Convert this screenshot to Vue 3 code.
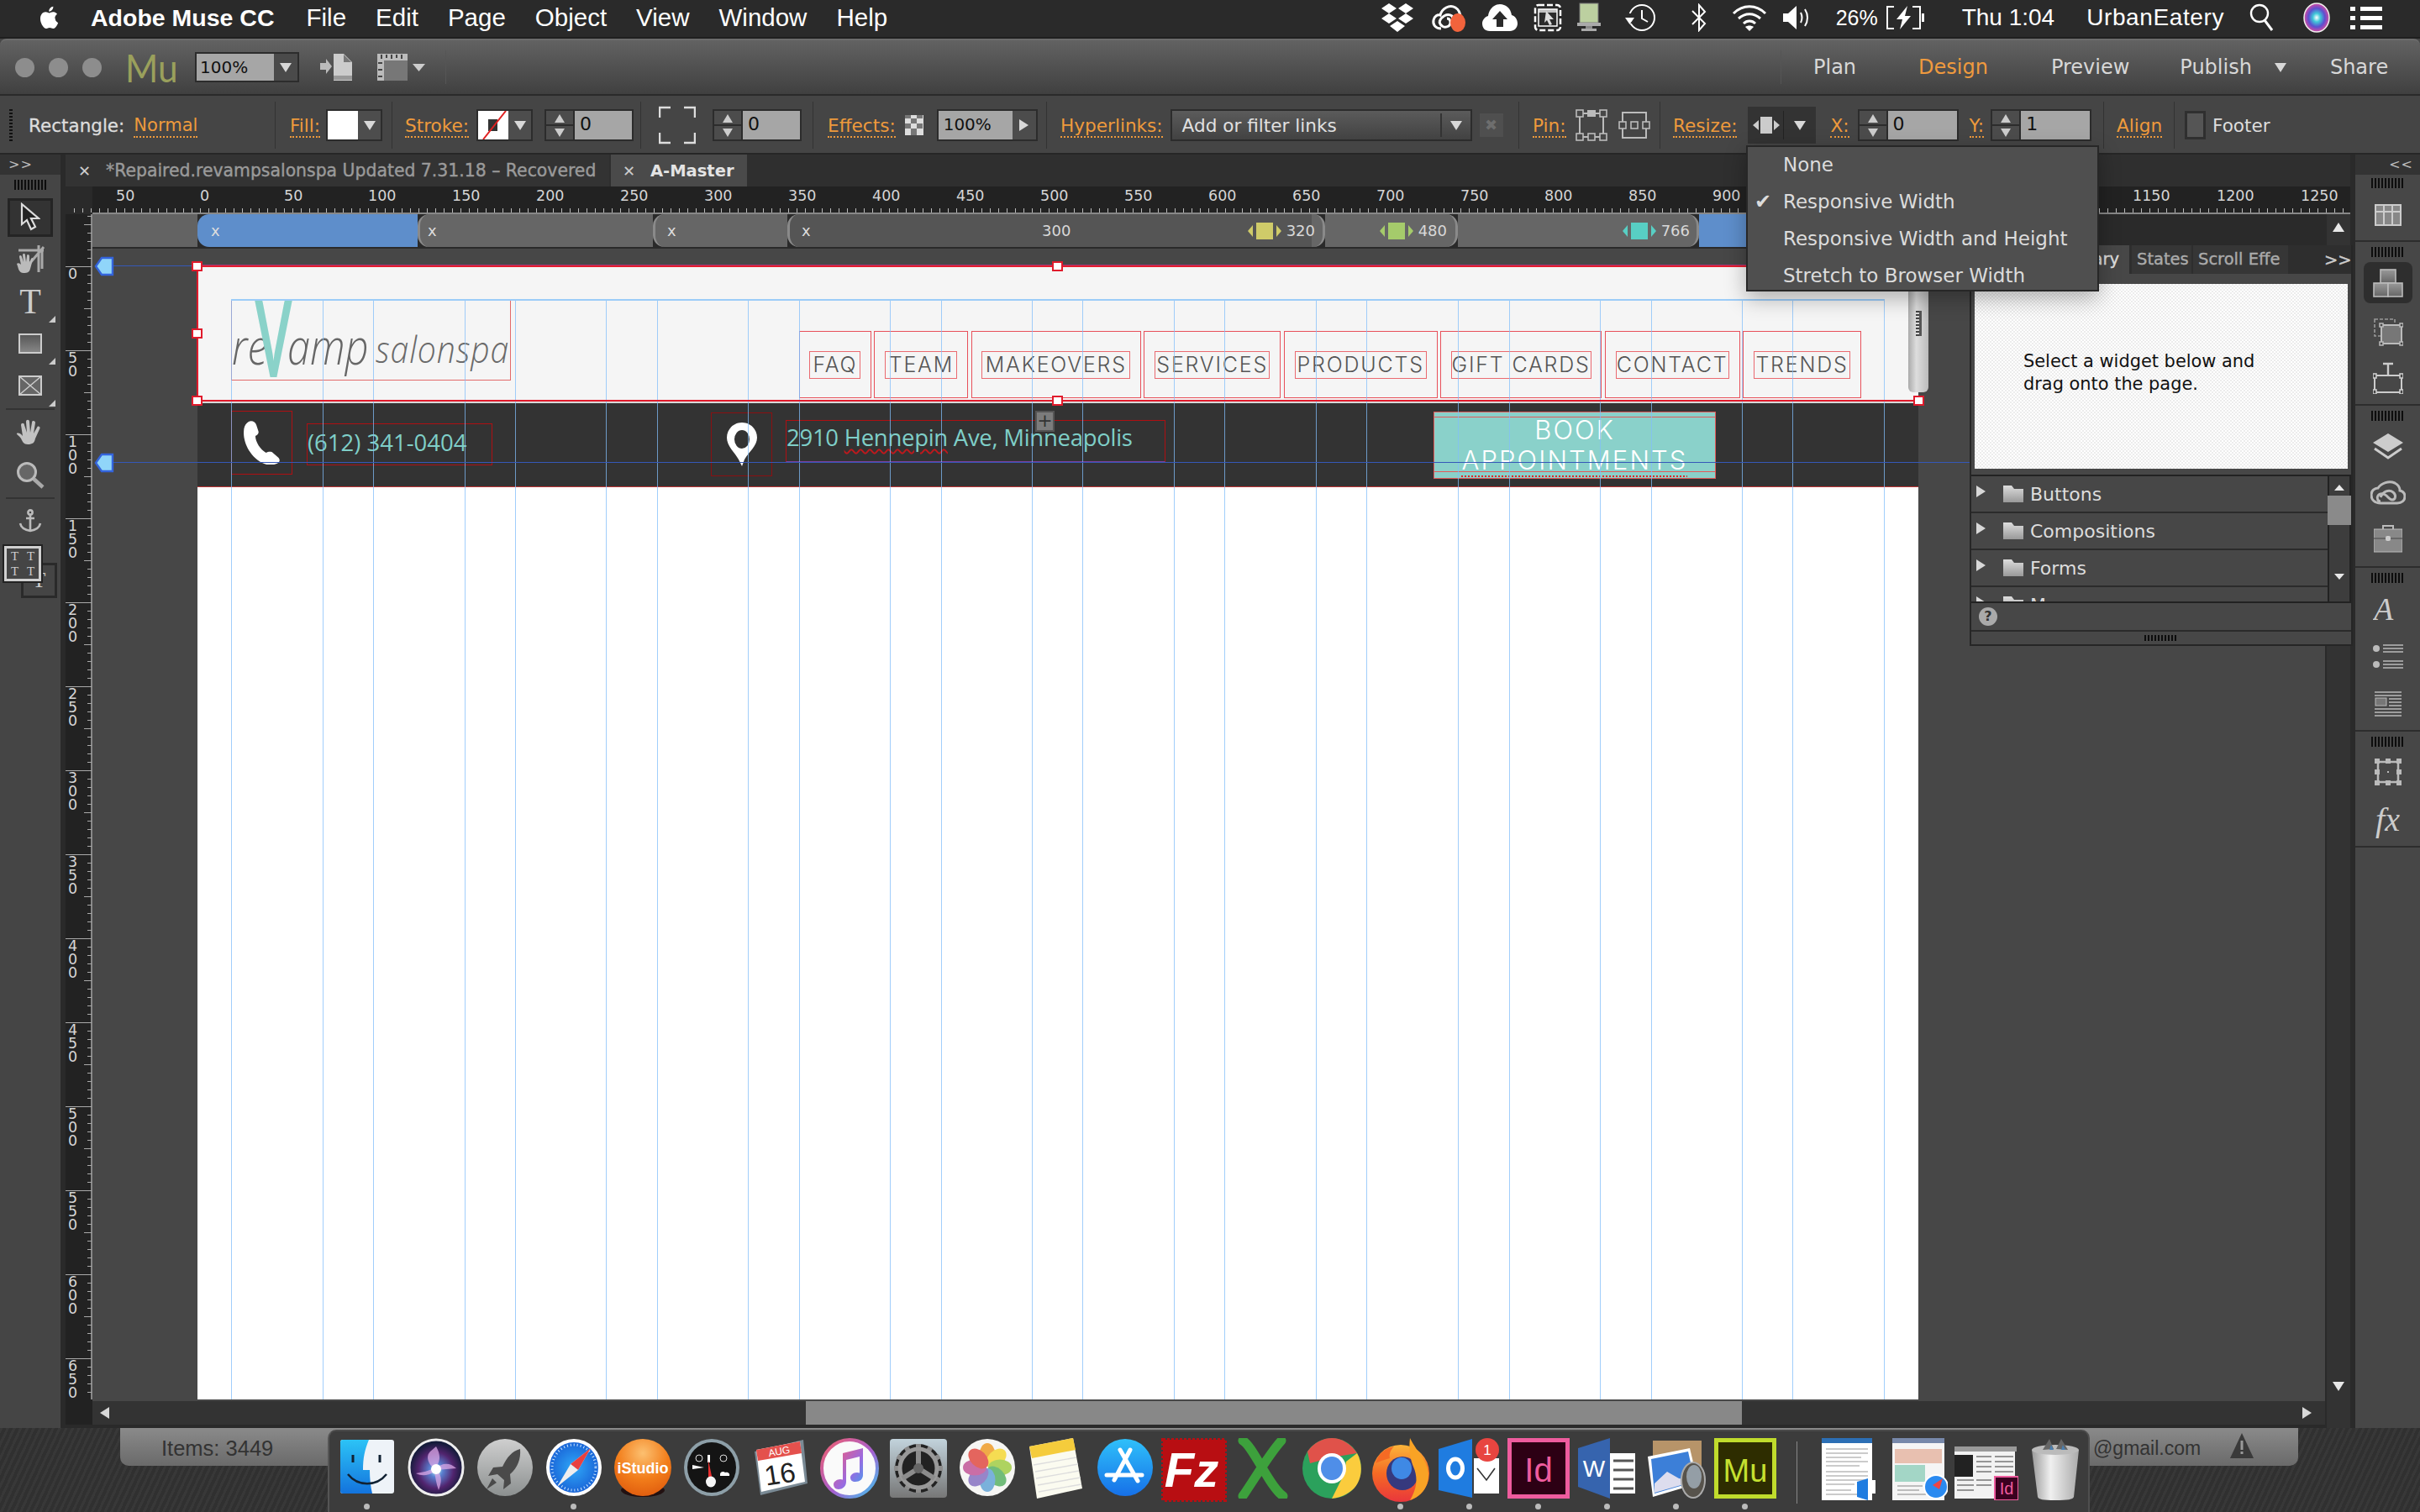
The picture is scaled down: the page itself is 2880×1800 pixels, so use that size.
<script setup>
const menus = ['File', 'Edit', 'Page', 'Object', 'View', 'Window', 'Help']
const rulerTicks = []
for (let x = 10; x <= 2719; x += 10) {
  const u = x - 157
  const h = u % 100 === 0 ? 29 : u % 50 === 0 ? 10 : 5
  rulerTicks.push({ x: x + 0.5, h })
}
const rulerLabels = []
for (let u = -50; u <= 1250; u += 50) rulerLabels.push({ x: 157 + u * 2 + 3, t: String(Math.abs(u)) })
const vTicks = []
for (let y = 2; y <= 1410; y += 10) {
  const u = y - 62
  const major = u % 100 === 0
  vTicks.push({ y: y + 0.5, x: major ? 0 : u % 50 === 0 ? 22 : 26 })
}
const vLabels = []
for (let u = 0; u <= 650; u += 50) {
  vLabels.push({ y: 62 + u * 2, d: String(u).split('') })
}
const pageCols = [275, 384, 444, 553, 613, 721, 782, 890, 951, 1059, 1120, 1228, 1288, 1397, 1457, 1566, 1626, 1735, 1796, 1904, 1965, 2073, 2133, 2242].map(x => x - 235)
const nav = [
  { t: 'FAQ', w: 86, i: 61 }, { t: 'TEAM', w: 112, i: 86 }, { t: 'MAKEOVERS', w: 202, i: 177 },
  { t: 'SERVICES', w: 163, i: 137 }, { t: 'PRODUCTS', w: 183, i: 157 }, { t: 'GIFT CARDS', w: 192, i: 167 },
  { t: 'CONTACT', w: 161, i: 135 }, { t: 'TRENDS', w: 141, i: 115 }
]
const folders = ['Buttons', 'Compositions', 'Forms', 'Menus']
const petals = [
  ['#f0a030', 0], ['#f5d93c', 45], ['#a5cf4c', 90], ['#5fb56a', 135],
  ['#6aa8d8', 180], ['#8a76c4', 225], ['#c45c9c', 270], ['#e2524a', 315]
]
const gearTeeth = [0, 30, 60, 90, 120, 150, 180, 210, 240, 270, 300, 330]
</script>

<template>
  <div class="screen">
    <header class="menubar">
      <svg class="apple" viewBox="0 0 24 24"><path fill="#fff" d="M18.7 12.5c0-2.6 2.1-3.8 2.2-3.9-1.2-1.8-3.1-2-3.7-2-1.6-.2-3.1.9-3.9.9s-2.1-.9-3.4-.9C8.2 6.6 6.6 7.6 5.7 9.1c-1.9 3.2-.5 8 1.3 10.6.9 1.3 2 2.7 3.3 2.7 1.3-.1 1.8-.9 3.4-.9s2 .9 3.4.8c1.4 0 2.3-1.3 3.2-2.6 1-1.5 1.4-2.9 1.4-3-.1 0-2.8-1.1-2.8-4.2zM16 4.6c.7-.9 1.2-2.1 1.1-3.3-1 0-2.3.7-3 1.6-.7.8-1.2 2-1.1 3.2 1.2.1 2.3-.6 3-1.5z"/></svg>
      <strong class="appname">Adobe Muse CC</strong>
      <span v-for="m in menus" :key="m" class="menu">{{ m }}</span>
      <div class="status">
        <span class="slot w60"><svg width="40" height="34" viewBox="0 0 40 34"><g fill="#fff"><path d="M10 0l9 6-9 6-9-6zM30 0l9 6-9 6-9-6zM10 12l9 6-9 6-9-6zM30 12l9 6-9 6-9-6zM20 21l9 6-9 7-9-7z"/></g></svg></span>
        <span class="slot w62"><svg width="42" height="34" viewBox="0 0 42 34"><g fill="none" stroke="#fff" stroke-width="3"><path d="M12 30C5 30 2 25 3 20 4 15 8 13 11 14 13 6 22 1 29 5c5 3 6 8 6 12"/><path d="M10 22c2-6 9-11 15-7l6 12"/><path d="M10 22c1 5 6 8 11 5 4-3 2-9-2-9"/></g><ellipse cx="32" cy="23" rx="9" ry="11" fill="#f2633c"/></svg></span>
        <span class="slot w60"><svg width="42" height="34" viewBox="0 0 42 34"><path fill="#fff" d="M9 33C3 33 0 29 0 24c0-4 3-8 7-9C8 7 14 1 21 1s13 5 14 13c4 1 7 5 7 10 0 5-4 9-9 9z"/><path fill="#2b2b2b" d="M21 9l9 10h-5v9h-8v-9h-5z"/></svg></span>
        <span class="slot w54"><svg width="34" height="34" viewBox="0 0 34 34"><rect x="2" y="2" width="30" height="30" rx="4" fill="none" stroke="#fff" stroke-width="2.5" stroke-dasharray="7 3"/><rect x="6" y="7" width="22" height="20" fill="#2b2b2b" stroke="#fff" stroke-width="1.5"/><path fill="#fff" d="M6 7h22v4H6z" opacity=".7"/><path fill="#ddd" d="M15 9l9 10-5 0 3 6-3 1-3-6-3 3z"/></svg></span>
        <span class="slot w44"><svg width="30" height="36" viewBox="0 0 30 36"><rect x="4" y="1" width="22" height="23" fill="#bcd0a0" stroke="#777"/><rect x="1" y="24" width="28" height="4" fill="#aaa"/><rect x="11" y="28" width="8" height="3" fill="#888"/><rect x="6" y="31" width="18" height="3" fill="#aaa"/></svg></span>
        <span class="slot w78"><svg width="38" height="34" viewBox="0 0 38 34"><circle cx="21" cy="17" r="15" fill="none" stroke="#fff" stroke-width="2"/><path d="M21 8v10l7 4" fill="none" stroke="#fff" stroke-width="2"/><path fill="#2b2b2b" d="M0 12h12v12H0z"/><path fill="#fff" d="M1 17h11l-5.5 8z"/></svg></span>
        <span class="slot w62"><svg width="20" height="34" viewBox="0 0 20 34"><path d="M2 9l15 15-7 8V2l7 8L2 25" fill="none" stroke="#fff" stroke-width="2"/></svg></span>
        <span class="slot w58"><svg width="42" height="32" viewBox="0 0 42 32"><g fill="none" stroke="#fff" stroke-width="3"><path d="M2 11c11-11 27-11 38 0"/><path d="M8 17c8-7 18-7 26 0"/><path d="M14 23c4-4 10-4 14 0"/></g><path fill="#fff" d="M21 32l-5-5c3-2 7-2 10 0z"/></svg></span>
        <span class="slot w56"><svg width="34" height="30" viewBox="0 0 34 30"><path fill="#fff" d="M0 10h6L16 1v28L6 20H0z"/><g fill="none" stroke="#fff" stroke-width="2"><path d="M21 9c2 4 2 8 0 12"/><path d="M26 5c4 6 4 14 0 20"/></g></svg></span>
        <span class="pct">26%</span>
        <svg class="batt" width="46" height="30" viewBox="0 0 46 30"><path fill="none" stroke="#fff" stroke-width="2" d="M10 2H2v26h8M32 2h9v26h-9"/><rect x="43" y="10" width="3" height="10" fill="#fff"/><path fill="#fff" d="M26 1L13 17h7l-3 12 13-16h-7z"/></svg>
        <span class="clock">Thu 1:04</span>
        <span class="user">UrbanEatery</span>
        <span class="slot w90"><svg width="30" height="34" viewBox="0 0 30 34"><circle cx="12" cy="12" r="10" fill="none" stroke="#fff" stroke-width="2.4"/><path d="M18 20l9 12" stroke="#fff" stroke-width="3"/></svg></span>
        <span class="slot w40"><svg width="32" height="36" viewBox="0 0 32 36"><defs><radialGradient id="siriA"><stop offset="0" stop-color="#fff"/><stop offset=".3" stop-color="#3fc8d8"/><stop offset=".65" stop-color="#5c4fd0"/><stop offset="1" stop-color="#d64aa0"/></radialGradient></defs><ellipse cx="16" cy="18" rx="15" ry="17" fill="url(#siriA)" stroke="#eee" stroke-width="1.5"/></svg></span>
        <span class="slot w78"><svg width="38" height="30" viewBox="0 0 38 30"><g fill="#fff"><rect x="0" y="2" width="6" height="5"/><rect x="0" y="13" width="6" height="5"/><rect x="0" y="24" width="6" height="5"/><rect x="12" y="2" width="26" height="5"/><rect x="12" y="13" width="26" height="5"/><rect x="12" y="24" width="26" height="5"/></g></svg></span>
      </div>
    </header>

    <section class="window">
      <div class="titlebar">
        <div class="lights"><i></i><i></i><i></i></div>
        <span class="mu">Mu</span>
        <div class="zoombox"><span class="zoomval">100%</span><span class="zoomdd"><i class="tri"></i></span></div>
        <svg class="ti1" width="38" height="32" viewBox="0 0 38 32"><path fill="#bbb" d="M0 11h7V6l7 9-7 9v-5H0z"/><path fill="#ccc" d="M16 0h12l10 10v22H16z"/><path fill="#777" d="M28 1l9 9h-9z"/><rect x="16" y="26" width="22" height="5" fill="#999"/></svg>
        <svg class="ti2" width="60" height="32" viewBox="0 0 60 32"><rect x="0" y="0" width="36" height="32" fill="#bbb"/><rect x="8" y="8" width="28" height="24" fill="#777"/><g fill="#444"><rect x="4" y="1" width="2" height="5"/><rect x="10" y="1" width="2" height="4"/><rect x="16" y="1" width="2" height="5"/><rect x="22" y="1" width="2" height="4"/><rect x="28" y="1" width="2" height="5"/><rect x="1" y="10" width="5" height="2"/><rect x="1" y="18" width="5" height="2"/><rect x="1" y="26" width="5" height="2"/></g><path fill="#ccc" d="M42 12h15l-7.5 9z"/></svg>
        <i class="vsep tbsep1"></i>
        <i class="vsep tbsep2"></i>
        <span class="tab-plan">Plan</span>
        <span class="tab-design">Design</span>
        <span class="tab-preview">Preview</span>
        <span class="tab-publish">Publish</span>
        <i class="tri publish-tri"></i>
        <span class="tab-share">Share</span>
      </div>

      <div class="controlbar">
        <div class="cg g-type"><i class="grip-v"></i><span class="rect-label">Rectangle:</span><span class="olink normal">Normal</span></div>
        <div class="cg g-fill"><span class="olink">Fill:</span>
          <div class="swatch"><i class="sw-w"></i><span class="sw-dd"><i class="tri"></i></span></div></div>
        <div class="cg g-stroke"><span class="olink">Stroke:</span>
          <div class="swatch"><span class="sw-w sw-none"><svg width="35" height="34" viewBox="0 0 35 34"><rect x="12" y="10" width="11" height="14" fill="#333"/><path d="M6 34L33 0" stroke="#e02020" stroke-width="2"/></svg></span><span class="sw-dd"><i class="tri"></i></span></div>
          <div class="spin s106"><span class="steps"><i class="up"></i><i class="down"></i></span><span class="val">0</span></div></div>
        <div class="cg g-corner">
          <svg class="corner" width="44" height="46" viewBox="0 0 44 46"><path fill="none" stroke="#ddd" stroke-width="2.5" d="M14 2H1v12M30 2h13v12M14 44H1V32M30 44h13V32"/></svg>
          <div class="spin s106"><span class="steps"><i class="up"></i><i class="down"></i></span><span class="val">0</span></div></div>
        <div class="cg g-effects"><span class="olink">Effects:</span>
          <svg class="check" width="22" height="24" viewBox="0 0 22 24"><rect width="22" height="24" fill="#ddd"/><g fill="#777"><rect width="7" height="4"/><rect x="14" width="7" height="4"/><rect x="7" y="4" width="7" height="6"/><rect y="10" width="7" height="6"/><rect x="14" y="10" width="7" height="6"/><rect x="7" y="16" width="7" height="8"/></g></svg>
          <div class="opacity"><span class="val pctv">100%</span><span class="arrowbtn"><i class="tri-r"></i></span></div></div>
        <div class="cg g-links"><span class="olink">Hyperlinks:</span>
          <div class="linkbox"><span class="linktext">Add or filter links</span><i class="linksep"></i><i class="tri"></i></div>
          <span class="xbtn">✖</span></div>
        <div class="cg g-pin"><span class="olink">Pin:</span>
          <svg width="38" height="38" viewBox="0 0 38 38" class="pin1"><rect x="5" y="5" width="28" height="28" fill="none" stroke="#bbb" stroke-width="2"/><g fill="#474747" stroke="#bbb" stroke-width="1.6"><rect x="1" y="1" width="8" height="8"/><rect x="29" y="1" width="8" height="8"/><rect x="1" y="29" width="8" height="8"/><rect x="15" y="29" width="8" height="8"/><rect x="29" y="29" width="8" height="8"/></g><rect x="14" y="1" width="10" height="8" fill="#bbb"/></svg>
          <svg width="38" height="38" viewBox="0 0 38 38" class="pin2"><rect x="5" y="4" width="28" height="30" fill="none" stroke="#bbb" stroke-width="2"/><g fill="#474747" stroke="#bbb" stroke-width="1.6"><rect x="1" y="15" width="8" height="8"/><rect x="15" y="15" width="8" height="8"/><rect x="29" y="15" width="8" height="8"/></g></svg>
        </div>
        <div class="cg g-resize"><span class="olink">Resize:</span>
          <div class="resizebox"><svg width="32" height="20" viewBox="0 0 32 20"><rect x="9" y="0" width="14" height="20" fill="#ccc"/><path fill="#ccc" d="M0 10l7-6v12zM32 10l-7-6v12z"/></svg><i class="linksep"></i><i class="tri"></i></div>
          <span class="olink">X:</span>
          <div class="spin s120"><span class="steps"><i class="up"></i><i class="down"></i></span><span class="val">0</span></div>
          <span class="olink">Y:</span>
          <div class="spin s120"><span class="steps"><i class="up"></i><i class="down"></i></span><span class="val">1</span></div></div>
        <div class="cg g-align"><span class="olink">Align</span></div>
        <div class="cg g-footer"><i class="cbox"></i><span class="foot">Footer</span></div>
      </div>

      <div class="workspace">
        <aside class="lefttools">
          <div class="collapse">&gt;&gt;</div>
          <i class="grip"></i>
          <div class="tool sel"><span class="selbox"><svg width="24" height="36" viewBox="0 0 24 36"><path d="M2 2v24l6-5 5 11 5-3-5-10h9z" fill="#222" stroke="#ddd" stroke-width="2.2"/></svg></span></div>
          <div class="tool"><svg width="40" height="34" viewBox="0 0 40 34"><path fill="none" stroke="#aaa" stroke-width="3" d="M14 6h20v22M6 6h30M30 0v32M36 2L14 28"/><path fill="#bbb" d="M4 22c2-2 5 1 5 1l-2-9c0-3 3-2 3 0l2 6-1-8c0-3 3-3 3 0l1 8 1-7c0-3 3-2 3 0l0 8 2-5c1-2 3-1 2 1l-3 11c-1 4-3 5-8 5-6 0-6-6-8-11z"/></svg></div>
          <div class="tool"><span class="tool-t">T</span><i class="corner-tri"></i></div>
          <div class="tool"><svg width="28" height="24" viewBox="0 0 28 24"><defs><linearGradient id="gr1" x1="0" x2="0" y1="0" y2="1"><stop offset="0" stop-color="#555"/><stop offset="1" stop-color="#888"/></linearGradient></defs><rect x="1" y="1" width="26" height="22" fill="url(#gr1)" stroke="#ccc" stroke-width="2"/></svg><i class="corner-tri"></i></div>
          <div class="tool"><svg width="28" height="24" viewBox="0 0 28 24"><rect x="1" y="1" width="26" height="22" fill="#666" stroke="#ccc" stroke-width="2"/><path d="M1 1l26 22M27 1L1 23" stroke="#ccc" stroke-width="1.5"/></svg><i class="corner-tri"></i></div>
          <i class="hsep first"></i>
          <div class="tool"><svg width="34" height="34" viewBox="0 0 34 34"><path fill="#c2c2c2" d="M1 17c3-2 7 3 7 3L6 7c0-3 4-3 4 0l3 9-1-13c0-3 4-3 4 0l1 13 2-12c0-3 4-2 4 0l-2 13 4-7c1-3 5-1 3 2l-5 11c-1 5-3 7-9 7-5 0-6-3-8-7-2-3-6-5-5-6z"/></svg></div>
          <div class="tool"><svg width="34" height="34" viewBox="0 0 34 34"><circle cx="13" cy="13" r="10.5" fill="#666" stroke="#bbb" stroke-width="3"/><path d="M21 21l11 10" stroke="#aaa" stroke-width="4.5"/></svg></div>
          <i class="hsep"></i>
          <div class="tool"><svg width="28" height="28" viewBox="0 0 28 28"><g fill="none" stroke="#bbb" stroke-width="2.6"><circle cx="14" cy="4" r="2.6"/><path d="M14 7v19M9 11h10M2 17c1 5 6 8 12 9 6-1 11-4 12-9"/></g></svg></div>
          <div class="tboxes">
            <span class="tbox back"><span>T</span></span>
            <span class="tbox front"><span>T</span><span>T</span><span>T</span><span>T</span></span>
          </div>
        </aside>

        <main class="main">
          <div class="tabs">
            <div class="tab t1"><b class="tx">✕</b><span>*Repaired.revampsalonspa Updated 7.31.18 – Recovered</span></div>
            <div class="tab t2"><b class="tx">✕</b><span>A-Master</span></div>
          </div>
          <svg class="hruler" width="2719" height="33" viewBox="0 0 2719 33">
            <rect x="32" y="0" width="2687" height="33" fill="#222"/>
            <rect x="32" y="31" width="2687" height="2" fill="#888"/>
            <path v-for="t in rulerTicks" :key="t.x" :d="`M${t.x} 31v-${t.h}`" stroke="#bbb" fill="none"/>
            <text v-for="l in rulerLabels" :key="l.x" :x="l.x" y="17" class="rtext">{{ l.t }}</text>
          </svg>
          <div class="below">
            <svg class="vruler" width="32" height="1441" viewBox="0 0 32 1441">
              <rect width="32" height="1441" fill="#222"/>
              <rect x="30" width="2" height="1411" fill="#888"/>
              <path v-for="t in vTicks" :key="t.y" :d="`M${t.x} ${t.y}H31`" stroke="#aaa" fill="none"/>
              <g v-for="l in vLabels" :key="l.y">
                <text v-for="(c, i) in l.d" :key="i" x="3" :y="l.y + 15 + i * 16" class="rtext">{{ c }}</text>
              </g>
            </svg>
            <div class="stagecol">
              <div class="bpbar">
                <div class="seg s0"></div>
                <div class="seg s1"><b class="bx">x</b></div>
                <div class="seg s2 lc"><b class="bx">x</b></div>
                <div class="seg s3 lc"><b class="bx">x</b></div>
                <div class="seg s4 lc"><b class="bx">x</b><span class="bp300">300</span>
                  <span class="bpm m320"><i class="la yl"></i><i class="bpr yb"></i><i class="ra yl"></i><em>320</em></span></div>
                <div class="seg s6 rc"><span class="bpm m480"><i class="la gr"></i><i class="bpr gb"></i><i class="ra gr"></i><em>480</em></span></div>
                <div class="seg s7 rc"><span class="bpm m766"><i class="la te"></i><i class="bpr tb"></i><i class="ra te"></i><em>766</em></span></div>
                <div class="seg s8"></div>
                <div class="seg s9"></div>
              </div>
              <div class="stage">
                <div class="guide-h g1"></div>
                <div class="guide-h g2"></div>
                <svg class="gmark gm1" width="24" height="24" viewBox="0 0 24 24"><path d="M22 2H9L2 12l7 10h13z" fill="#90d5f9" stroke="#3464dc" stroke-width="2.4"/></svg>
                <svg class="gmark gm2" width="24" height="24" viewBox="0 0 24 24"><path d="M22 2H9L2 12l7 10h13z" fill="#90d5f9" stroke="#3464dc" stroke-width="2.4"/></svg>
                <div class="page">
                  <div class="site-head">
                    <div class="logo">
                      <span class="lg-re">re</span><span class="lg-v">V</span><span class="lg-amp">amp</span>
                      <span class="lg-sp">salonspa</span>
                    </div>
                    <nav class="nav">
                      <div v-for="n in nav" :key="n.t" class="navcell" :style="{ width: n.w + 'px' }">
                        <span class="navlabel" :style="{ width: n.i + 'px' }">{{ n.t }}</span>
                      </div>
                    </nav>
                  </div>
                  <div class="site-band">
                    <div class="phonebox"><svg width="46" height="52" viewBox="0 0 40 52" preserveAspectRatio="none"><path fill="#fff" d="M6 1c3-2 7 0 8 4l2 7c1 3-1 5-3 6 0 7 5 16 11 20 2-1 5-2 7 0l6 6c2 3 1 6-2 7-4 2-9 2-13 0C8 44 0 26 1 12 1 7 3 3 6 1z"/></svg></div>
                    <div class="phonenum">(612) 341-0404</div>
                    <div class="pinbox"><svg width="36" height="52" viewBox="0 0 36 52"><path fill="#fff" fill-rule="evenodd" d="M18 0C8 0 0 8 0 18c0 10 9 17 14 26l4 8 3-8c5-9 15-16 15-26C36 8 28 0 18 0zm0 9a9 11 0 1 1 0 22 9 11 0 0 1 0-22z"/></svg></div>
                    <div class="addr"><span>2910 <u class="sq">Hennepin</u> Ave, Minneapolis</span></div>
                    <div class="plus">+</div>
                    <div class="book"><span>BOOK</span><span class="ap">APPOINTMENTS</span></div>
                  </div>
                  <i v-for="c in pageCols" :key="c" class="col" :style="{ left: c + 'px' }"></i>
                  <i class="col-top"></i>
                  <i class="sel-top"></i>
                  <i class="sel-left"></i>
                  <i class="sel-bottom"></i>
                  <i class="h h1"></i><i class="h h2"></i><i class="h h3"></i><i class="h h4"></i><i class="h h5"></i><i class="h h6"></i>
                  <div class="resizer"><i></i></div>
                </div>
              </div>
              <div class="hscroll">
                <i class="tri-l"></i>
                <span class="hthumb"></span>
                <i class="tri-r hr"></i>
              </div>
            </div>
            <div class="vscroll"><i class="tri-u"></i><i class="tri-d"></i></div>
          </div>
        </main>

        <aside class="rightdock">
          <div class="collapse r">&lt;&lt;</div>
          <div class="rsec s-a"><i class="grip"></i>
            <svg class="ric" width="32" height="26" viewBox="0 0 32 26"><rect width="32" height="26" fill="#888"/><path d="M0 1h32M1 0v26M31 0v26M0 25h32M0 9h32M11 0v26M21 0v26" stroke="#ccc" stroke-width="2"/></svg></div>
          <div class="rsec s-b"><i class="grip"></i>
            <span class="rbtn"><svg width="36" height="34" viewBox="0 0 36 34"><defs><linearGradient id="gr2" x1="0" x2="0" y1="0" y2="1"><stop offset="0" stop-color="#999"/><stop offset="1" stop-color="#666"/></linearGradient></defs><g fill="url(#gr2)" stroke="#bbb" stroke-width="1.6"><rect x="9" y="1" width="18" height="16"/><rect x="1" y="17" width="17" height="16"/><rect x="18" y="17" width="17" height="16"/></g></svg></span>
            <svg class="ric r1" width="36" height="36" viewBox="0 0 36 36"><rect x="2" y="3" width="24" height="20" fill="none" stroke="#999" stroke-width="1.6" stroke-dasharray="4 2"/><rect x="10" y="10" width="24" height="22" fill="#777" stroke="#bbb" stroke-width="2"/><g fill="#474747" stroke="#bbb" stroke-width="1.5"><rect x="8" y="8" width="4" height="4"/><rect x="32" y="8" width="4" height="4"/><rect x="8" y="30" width="4" height="4"/><rect x="32" y="30" width="4" height="4"/></g></svg>
            <svg class="ric r2" width="36" height="38" viewBox="0 0 36 38"><path d="M12 2h12M18 2v14" stroke="#ccc" stroke-width="2.4"/><rect x="2" y="16" width="32" height="20" fill="none" stroke="#ccc" stroke-width="2"/><g fill="#474747" stroke="#ccc" stroke-width="1.6"><rect x="0" y="14" width="4" height="5"/><rect x="32" y="14" width="4" height="5"/><rect x="0" y="33" width="4" height="5"/><rect x="32" y="33" width="4" height="5"/></g></svg></div>
          <div class="rsec s-c"><i class="grip"></i>
            <svg class="ric r3" width="36" height="35" viewBox="0 0 36 35"><path fill="#ccc" d="M18 0l18 11-18 11L0 11z"/><path fill="none" stroke="#ccc" stroke-width="3" d="M2 18l16 11 16-11"/></svg>
            <svg class="ric r4" width="42" height="30" viewBox="0 0 42 30"><g fill="none" stroke="#bbb" stroke-width="3"><path d="M12 28C5 28 1 24 1 18 1 13 5 10 9 10 13 4 22 1 29 4c4 2 6 5 6 9 4 1 6 4 6 7 0 5-4 8-9 8z"/><path d="M12 21c3-7 10-10 15-6 4 3 3 9-1 9-3 0-4-2-7-5-3-3-8-3-10 0-2 3 0 7 3 7"/></g></svg>
            <svg class="ric r5" width="34" height="34" viewBox="0 0 34 34"><path d="M11 6V2h12v4" fill="none" stroke="#bbb" stroke-width="2"/><rect y="6" width="34" height="27" fill="#888" stroke="#bbb"/><path d="M0 17h34" stroke="#474747"/><rect x="14" y="14" width="6" height="6" rx="2" fill="#ccc"/></svg></div>
          <div class="rsec s-d"><i class="grip"></i>
            <svg class="ric r6" width="36" height="34" viewBox="0 0 36 34"><text x="1" y="30" class="gly-a">A</text></svg>
            <svg class="ric r7" width="36" height="32" viewBox="0 0 36 32"><circle cx="4" cy="6" r="4" fill="#bbb"/><circle cx="4" cy="25" r="4" fill="#bbb"/><path d="M12 2h24M12 6h24M12 10h24M12 21h24M12 25h24M12 29h24" stroke="#bbb" stroke-width="1.4"/></svg>
            <svg class="ric r8" width="32" height="30" viewBox="0 0 32 30"><rect x="1" y="8" width="13" height="9" fill="#777" stroke="#bbb"/><path d="M0 1h32M0 5h32M17 9h15M17 13h15M17 17h15M0 21h32M0 25h32M0 29h32" stroke="#bbb" stroke-width="1.4"/></svg></div>
          <div class="rsec s-e"><i class="grip"></i>
            <svg class="ric r9" width="32" height="32" viewBox="0 0 32 32"><rect x="4" y="4" width="24" height="24" fill="none" stroke="#bbb" stroke-width="2.5"/><g fill="#bbb"><rect width="6" height="6"/><rect x="13" width="6" height="6"/><rect x="26" width="6" height="6"/><rect y="13" width="6" height="6"/><rect x="26" y="13" width="6" height="6"/><rect y="26" width="6" height="6"/><rect x="13" y="26" width="6" height="6"/><rect x="26" y="26" width="6" height="6"/><rect x="15" y="15" width="2" height="2"/></g></svg>
            <span class="fx">fx</span></div>
        </aside>
      </div>
    </section>

    <footer class="bottom">
      <div class="statuswin">
        <span class="items">Items: 3449</span>
        <span class="mailtxt">@gmail.com</span>
        <svg class="warn" width="30" height="30" viewBox="0 0 30 30"><path fill="#3a3a3a" d="M15 0L29 30H1z"/><path fill="#999" d="M13.5 9h3v11h-3zM13.5 22h3v3h-3z"/></svg>
      </div>
      <div class="dock">
        <div class="dslot run"><svg width="64" height="70" viewBox="0 0 64 70"><defs><linearGradient id="fnd" x1="0" x2="0" y1="0" y2="1"><stop offset="0" stop-color="#2cc3f6"/><stop offset="1" stop-color="#1373dd"/></linearGradient></defs><rect y="2" width="64" height="64" rx="3" fill="#eef3f8"/><path fill="url(#fnd)" d="M3 2h31c-5 12-7 22-7 36h8c0 10 1 20 3 28H3a3 3 0 0 1-3-3V5a3 3 0 0 1 3-3z"/><path d="M15 20v9M47 20v9" stroke="#123" stroke-width="3"/><path d="M9 43c12 15 34 15 46 0" stroke="#123" stroke-width="2.5" fill="none"/></svg><i class="dot"></i></div>
        <div class="dslot"><svg width="68" height="70" viewBox="0 0 68 70"><defs><radialGradient id="sir" cx=".5" cy=".55"><stop offset="0" stop-color="#b9fff2"/><stop offset=".25" stop-color="#5a7fd0"/><stop offset=".65" stop-color="#51246e"/><stop offset="1" stop-color="#141b3a"/></radialGradient></defs><ellipse cx="34" cy="35" rx="32" ry="33" fill="url(#sir)" stroke="#eee" stroke-width="3"/><path d="M34 10c8 14 2 20 0 26 6-6 16-8 24 0-8 1-16 1-23 2 6 6 6 14 2 24-3-8-4-16-5-22-6 4-14 6-22 2 8-1 15-3 21-6-6-5-10-14-4-20z" fill="#d9a7e6" opacity=".75"/><circle cx="34" cy="37" r="6" fill="#fff"/></svg></div>
        <div class="dslot"><svg width="68" height="70" viewBox="0 0 68 70"><defs><linearGradient id="lau" x1="0" x2="0" y1="0" y2="1"><stop offset="0" stop-color="#cfcfcf"/><stop offset="1" stop-color="#8c9090"/></linearGradient></defs><ellipse cx="34" cy="35" rx="33" ry="34" fill="url(#lau)"/><path fill="#4a4a4a" d="M52 13c1 12-3 22-12 30l1 11-9 7 1-11-8-7-11 2 6-10 11-1c6-12 11-18 21-21zM19 48l5 5-12 8z"/></svg></div>
        <div class="dslot run"><svg width="68" height="70" viewBox="0 0 68 70"><defs><radialGradient id="saf"><stop offset="0" stop-color="#2fa8f8"/><stop offset="1" stop-color="#1a66d8"/></radialGradient></defs><ellipse cx="34" cy="35" rx="33" ry="34" fill="#fff"/><ellipse cx="34" cy="35" rx="29" ry="30" fill="url(#saf)"/><ellipse cx="34" cy="35" rx="26" ry="27" fill="none" stroke="#cfe8ff" stroke-width="3" stroke-dasharray="1 3"/><path fill="#e8e8e8" d="M54 12L30 31l9 7z"/><path fill="#e84040" d="M54 12L30 31l9 7z"/><path fill="#eee" d="M14 58l16-27 9 7z"/></svg><i class="dot"></i></div>
        <div class="dslot"><svg width="70" height="72" viewBox="0 0 70 72"><defs><radialGradient id="ist" cx=".5" cy=".25" r=".9"><stop offset="0" stop-color="#fcc070"/><stop offset=".5" stop-color="#f27d1a"/><stop offset="1" stop-color="#d9500a"/></radialGradient></defs><ellipse cx="35" cy="62" rx="26" ry="8" fill="#211"/><ellipse cx="35" cy="35" rx="34" ry="34" fill="url(#ist)"/><text x="35" y="42" class="ist">iStudio</text></svg></div>
        <div class="dslot"><svg width="68" height="70" viewBox="0 0 68 70"><ellipse cx="34" cy="35" rx="33" ry="34" fill="#8d9fa8"/><ellipse cx="34" cy="35" rx="29" ry="30" fill="#141414"/><g fill="#fff"><path d="M11 37l14-2-14-3zM29 20h3v9h-3zM44 43c0-3 4-4 6-2 3-1 6 1 5 4H44z"/></g><circle cx="19" cy="24" r="4" fill="none" stroke="#ddd"/><circle cx="48" cy="24" r="4" fill="none" stroke="#ddd"/><path fill="#e82d2d" d="M30 26l5 24h-5z"/><ellipse cx="33" cy="52" rx="6" ry="6.5" fill="#f5f5f5"/></svg></div>
        <div class="dslot"><svg width="66" height="72" viewBox="0 0 66 72"><path fill="#7a8a95" d="M2 16l58-14 5 52-56 14z"/><path fill="#fff" d="M4 14l52-10 6 48-52 12z"/><path fill="#e4514d" d="M4 14l52-10 2 14-52 9z"/><text x="32" y="20" class="cal-m" transform="rotate(-10 32 20)">AUG</text><text x="34" y="54" class="cal-d" transform="rotate(-9 34 54)">16</text></svg></div>
        <div class="dslot"><svg width="70" height="72" viewBox="0 0 70 72"><defs><linearGradient id="itr" x1="0" x2="1" y1="0" y2="1"><stop offset="0" stop-color="#f25f6c"/><stop offset=".55" stop-color="#a75fd0"/><stop offset="1" stop-color="#3dc8f0"/></linearGradient><linearGradient id="itn" x1="0" x2="1" y1="0" y2="1"><stop offset="0" stop-color="#f55a78"/><stop offset=".6" stop-color="#9a6ae0"/><stop offset="1" stop-color="#3ea0f0"/></linearGradient></defs><ellipse cx="35" cy="36" rx="33" ry="34" fill="#fafafa" stroke="url(#itr)" stroke-width="4"/><path fill="url(#itn)" d="M27 18l24-6v32c0 5-4 8-9 8-4 0-6-2-6-5s3-6 8-6l3 .5V22l-16 4v26c0 6-5 9-9 9s-6-3-6-6 4-6 8-6l3 .5z"/></svg></div>
        <div class="dslot"><svg width="68" height="72" viewBox="0 0 68 72"><defs><linearGradient id="sys" x1="0" x2="0" y1="0" y2="1"><stop offset="0" stop-color="#c2d3dc"/><stop offset="1" stop-color="#777"/></linearGradient></defs><rect y="1" width="68" height="70" rx="4" fill="url(#sys)"/><ellipse cx="34" cy="36" rx="28" ry="29" fill="#222"/><g fill="#8c8c8c"><rect v-for="a in gearTeeth" :key="a" x="31" y="7" width="6" height="8" :transform="`rotate(${a} 34 36)`"/></g><ellipse cx="34" cy="36" rx="22" ry="23" fill="none" stroke="#999" stroke-width="5"/><path d="M34 36V15M34 36L15 48M34 36l19 12" stroke="#8c8c8c" stroke-width="6"/><circle cx="34" cy="36" r="6" fill="#666"/></svg></div>
        <div class="dslot"><svg width="68" height="70" viewBox="0 0 68 70"><ellipse cx="34" cy="35" rx="33" ry="34" fill="#f6f6f4"/><g opacity=".88"><ellipse v-for="p in petals" :key="p[1]" cx="34" cy="20" rx="9.5" ry="14" :fill="p[0]" :transform="`rotate(${p[1]} 34 35)`"/></g></svg></div>
        <div class="dslot"><svg width="64" height="72" viewBox="0 0 64 72"><path fill="#fbfbf0" d="M0 10L52 0l11 60-54 12z"/><path fill="#f5cc3c" d="M0 10L52 0l3 14L3 24z"/><g stroke="#ddd" stroke-width="1.4"><path d="M5 32l51-9M7 40l51-9M8 48l51-9M10 56l51-9M11 64l51-9"/></g></svg></div>
        <div class="dslot"><svg width="68" height="70" viewBox="0 0 68 70"><defs><linearGradient id="aps" x1="0" x2="0" y1="0" y2="1"><stop offset="0" stop-color="#2fc0fa"/><stop offset="1" stop-color="#1670e8"/></linearGradient></defs><ellipse cx="34" cy="35" rx="33" ry="34" fill="url(#aps)"/><g stroke="#fff" stroke-width="5" fill="none" stroke-linecap="round"><path d="M40 14L21 50M28 14l21 37M12 44h42"/></g></svg></div>
        <div class="dslot"><svg width="78" height="76" viewBox="0 0 78 76"><rect x="2" y="2" width="74" height="72" fill="#b80e12" stroke="#b80e12" stroke-width="4" stroke-dasharray="3 2"/><text x="36" y="58" class="fz">Fz</text></svg></div>
        <div class="dslot"><svg width="60" height="72" viewBox="0 0 60 72"><path d="M6 3c12 6 32 56 48 66M52 3C38 18 18 52 6 69" stroke="#3da13c" stroke-width="11" fill="none" stroke-linecap="round"/></svg></div>
        <div class="dslot"><svg width="70" height="72" viewBox="0 0 70 72"><ellipse cx="35" cy="36" rx="35" ry="36" fill="#2ba15c"/><path fill="#e0524a" d="M35 0c12 0 23 7 30 18L35 23l-26 7L6 16C13 6 24 0 35 0z"/><path fill="#fbcc3d" d="M65 18c8 14 6 34-6 44-7 6-15 9-24 10l14-28 3-16z"/><ellipse cx="35" cy="36" rx="17" ry="18" fill="#fff"/><ellipse cx="35" cy="36" rx="13" ry="14" fill="#4f8ee8"/></svg></div>
        <div class="dslot run"><svg width="70" height="76" viewBox="0 0 70 76"><defs><linearGradient id="ffx" x1="0" x2="0" y1="0" y2="1"><stop offset="0" stop-color="#fbb53a"/><stop offset=".5" stop-color="#f56a24"/><stop offset="1" stop-color="#e9363c"/></linearGradient></defs><ellipse cx="35" cy="42" rx="34" ry="34" fill="url(#ffx)"/><ellipse cx="37" cy="42" rx="19" ry="20" fill="#36397e"/><ellipse cx="36" cy="36" rx="12" ry="13" fill="#3f89e5"/><path fill="#f9a325" d="M46 0c9 18 22 28 22 44 0 16-10 26-22 30 8-14 10-26 4-40-3-8-6-18-4-34z"/><path fill="#f56a24" d="M5 30c3-12 12-18 22-20-5 5-6 10-5 14-7 2-13 4-17 6z"/></svg><i class="dot"></i></div>
        <div class="dslot run"><svg width="74" height="72" viewBox="0 0 74 72"><rect x="42" y="24" width="30" height="42" fill="#fff"/><path d="M46 36l11 14 10-14" fill="none" stroke="#333" stroke-width="1.6"/><path fill="#1f7ce0" d="M0 13l40-12v70L0 62z"/><ellipse cx="20" cy="36" rx="8.5" ry="11" fill="none" stroke="#fff" stroke-width="5"/><circle cx="58" cy="14" r="14" fill="#e84540"/><text x="58" y="20" class="badge">1</text></svg><i class="dot"></i></div>
        <div class="dslot run"><svg width="74" height="72" viewBox="0 0 74 72"><rect x="2.5" y="2.5" width="69" height="67" fill="#2d0014" stroke="#ee5c9e" stroke-width="5"/><text x="37" y="52" class="ai-t id">Id</text></svg><i class="dot"></i></div>
        <div class="dslot run"><svg width="70" height="72" viewBox="0 0 70 72"><rect x="36" y="18" width="32" height="48" fill="#fff"/><g stroke="#555" stroke-width="3"><path d="M42 27h24M42 38h24M42 49h24M42 60h24"/></g><path fill="#3664ae" d="M0 12L38 0v72L0 58z"/><text x="19" y="46" class="wd">W</text></svg><i class="dot"></i></div>
        <div class="dslot run"><svg width="72" height="72" viewBox="0 0 72 72"><rect x="8" y="3" width="58" height="48" fill="#b79469"/><path fill="#fff" d="M2 22L52 12l10 42-54 16z"/><path fill="#3c7fd8" d="M6 25l44-9 8 36-48 14z"/><path fill="#dde" d="M10 54l15-14 14 8 20 3-49 14z"/><ellipse cx="56" cy="50" rx="14" ry="21" fill="#57534c" stroke="#aaa" stroke-width="2"/><ellipse cx="57" cy="46" rx="9" ry="14" fill="#a8b7c4" opacity=".75"/></svg><i class="dot"></i></div>
        <div class="dslot run"><svg width="74" height="72" viewBox="0 0 74 72"><rect x="2.5" y="2.5" width="69" height="67" fill="#2e2d00" stroke="#c0dc2c" stroke-width="5"/><text x="37" y="52" class="ai-t mud">Mu</text></svg><i class="dot"></i></div>
        <i class="dsep"></i>
        <div class="dslot doc"><svg width="64" height="74" viewBox="0 0 64 74"><rect width="60" height="74" fill="#fff"/><rect width="60" height="6" fill="#2c6fb5"/><g stroke="#bbb" stroke-width="1.4"><path d="M5 13h50M5 18h50M5 23h42M5 28h50M5 33h40M5 40h50M5 45h50M5 50h46M5 55h34M5 62h30M5 67h38"/></g><path fill="#1f7ce0" d="M42 52l13-4v26l-13-4z"/><rect x="55" y="50" width="9" height="16" fill="#fff"/></svg></div>
        <div class="dslot doc2"><svg width="66" height="74" viewBox="0 0 66 74"><rect width="62" height="74" fill="#f5f5f5"/><rect width="62" height="6" fill="#7788aa"/><rect x="3" y="13" width="56" height="17" fill="#e8c0b0"/><rect x="3" y="32" width="36" height="20" fill="#a3d6c6"/><g stroke="#aaa" stroke-width="1.4"><path d="M6 57h30M6 62h26M6 67h34"/></g><circle cx="52" cy="58" r="14" fill="#2a8af0" stroke="#fff" stroke-width="2"/><path d="M60 48l-12 8 8 5z" fill="#e44"/></svg></div>
        <div class="dslot doc3"><svg width="76" height="64" viewBox="0 0 76 64"><rect width="74" height="6" fill="#999"/><rect y="6" width="72" height="56" fill="#f2f2f2"/><rect y="10" width="22" height="26" fill="#222"/><g stroke="#777" stroke-width="1.4"><path d="M26 12h18M26 18h18M26 24h18M26 30h18M48 12h22M48 18h22M48 24h22M48 30h22M3 40h20M3 46h20M3 52h20M26 40h18M26 46h18"/></g><rect x="48" y="36" width="28" height="28" fill="#3a0020" stroke="#ee5c9e" stroke-width="2"/><text x="62" y="57" class="ai-t idm">Id</text></svg></div>
        <div class="dslot trash"><svg width="58" height="74" viewBox="0 0 58 74"><defs><linearGradient id="trs" x1="0" x2="1" y1="0" y2="0"><stop offset="0" stop-color="#9a9a9a"/><stop offset=".4" stop-color="#f0f0f0"/><stop offset="1" stop-color="#aaa"/></linearGradient></defs><path fill="url(#trs)" d="M1 14h56l-6 56c-1 3-7 4-22 4S9 73 8 70z"/><ellipse cx="29" cy="14" rx="28" ry="6" fill="#bbb"/><path fill="#666" d="M14 14l8-13 5 12zM30 13l6-12 8 13z"/><path fill="#4a7fb0" d="M22 14l2-6 3 6zM36 14l2-6 3 6z"/></svg></div>
      </div>
    </footer>

    <div class="dropdown">
      <div class="dd-item">None</div>
      <div class="dd-item"><span class="ck">✔</span>Responsive Width</div>
      <div class="dd-item">Responsive Width and Height</div>
      <div class="dd-item">Stretch to Browser Width</div>
    </div>

    <div class="panel">
      <div class="ptabs">
        <span class="ptab lib">Widgets Library</span>
        <span class="ptab st">States</span>
        <span class="ptab sc">Scroll Effe</span>
        <span class="pmore">&gt;&gt;</span>
      </div>
      <div class="preview">
        <p>Select a widget below and<br>drag onto the page.</p>
      </div>
      <div class="plist">
        <div class="prows">
          <div v-for="f in folders" :key="f" class="prow">
            <i class="tri-r pt"></i>
            <svg width="24" height="20" viewBox="0 0 24 20"><defs><linearGradient id="fol" x1="0" x2="0" y1="0" y2="1"><stop offset="0" stop-color="#ddd"/><stop offset="1" stop-color="#999"/></linearGradient></defs><path fill="url(#fol)" d="M0 0h10l3 4h11v16H0z"/></svg>
            <span>{{ f }}</span>
          </div>
        </div>
        <div class="pscroll"><i class="tri-u small"></i><i class="pthumb"></i><i class="tri-d small"></i></div>
      </div>
      <div class="pfoot"><span class="help">?</span></div>
      <div class="pgrip"><i class="grip"></i></div>
    </div>
  </div>
</template>

<style>
html, body { margin: 0; padding: 0; background: #333; }
</style>

<style scoped>
* { box-sizing: border-box; }
i { display: block; font-style: normal; }
.screen { position: relative; width: 2880px; height: 1800px; overflow: hidden; background: #333; font-family: "DejaVu Sans", sans-serif; color: #ddd; }

/* menu bar */
.menubar { height: 46px; background: #2a2a2a; display: flex; align-items: center; font-family: "Liberation Sans", sans-serif; font-size: 29.5px; color: #fff; padding: 0 0 2px 42px; border-bottom: 2px solid #1f1f1f; }
.apple { width: 30px; height: 34px; flex: none; }
.appname { margin-left: 36px; margin-right: 38px; font-weight: 700; font-size: 28.5px; }
.menu { margin-right: 35px; }
.status { margin-left: auto; display: flex; align-items: center; padding-right: 25px; font-size: 28px; }
.slot { display: flex; justify-content: center; align-items: center; height: 44px; flex: none; }
.w40 { width: 40px; } .w44 { width: 44px; } .w54 { width: 54px; } .w56 { width: 56px; } .w58 { width: 58px; } .w60 { width: 60px; } .w62 { width: 62px; } .w78 { width: 78px; } .w90 { width: 90px; }
.pct { font-size: 25px; margin-left: 18px; width: 50px; }
.batt { margin-left: 9px; }
.clock { margin-left: 45px; }
.user { margin-left: 38px; letter-spacing: .6px; }

/* window */
.window { height: 1654px; display: flex; flex-direction: column; background: #474747; }
.titlebar { height: 66px; background: linear-gradient(#626262, #404040); display: flex; align-items: center; border-top: 2px solid #6c6c6c; border-radius: 8px 8px 0 0; font-size: 24px; position: relative; flex: none; }
.lights { display: flex; gap: 17px; margin-left: 18px; }
.lights i { width: 23px; height: 23px; border-radius: 50%; background: #8d8d8d; }
.mu { font-family: "Lato", sans-serif; font-weight: 400; font-size: 47px; color: #9aa05c; margin-left: 28px; width: 83px; transform: scaleX(.9); transform-origin: left; }
.zoombox { width: 124px; height: 36px; display: flex; border: 2px solid #2c2c2c; background: #4a4a4a; }
.zoomval { width: 92px; background: #a6a6a6; color: #111; font-size: 20px; padding-left: 4px; line-height: 32px; }
.zoomdd { flex: 1; display: flex; align-items: center; justify-content: center; }
.tri { width: 0; height: 0; border: 7px solid transparent; border-top: 11px solid #d8d8d8; border-bottom: 0; flex: none; }
.tri-r { width: 0; height: 0; border: 7px solid transparent; border-left: 11px solid #d8d8d8; border-right: 0; }
.tri-l { width: 0; height: 0; border: 7px solid transparent; border-right: 11px solid #d8d8d8; border-left: 0; }
.tri-u { width: 0; height: 0; border: 7px solid transparent; border-bottom: 11px solid #e8e8e8; border-top: 0; }
.tri-d { width: 0; height: 0; border: 7px solid transparent; border-top: 11px solid #e8e8e8; border-bottom: 0; }
.ti1 { margin-left: 25px; }
.ti2 { margin-left: 30px; }
.vsep { width: 1px; background: #2c2c2c; border-right: 1px solid #555; }
.tbsep1 { height: 40px; margin-left: 21px; }
.tbsep2 { height: 40px; margin-left: 1588px; }
.tab-plan { margin-left: 38px; }
.tab-design { margin-left: 74px; color: #ef9a3e; }
.tab-preview { margin-left: 75px; }
.tab-publish { margin-left: 60px; }
.publish-tri { margin-left: 27px; }
.tab-share { margin-left: 52px; }
.tab-plan, .tab-preview, .tab-publish, .tab-share { color: #d8d8d8; }

/* control bar */
.controlbar { height: 72px; background: #454545; border-top: 2px solid #2a2a2a; border-bottom: 2px solid #262626; display: flex; font-size: 21.6px; flex: none; }
.cg { display: flex; align-items: center; height: 56px; margin-top: 7px; border-right: 1px solid #333; flex: none; }
.olink { color: #ee9a3c; border-bottom: 2px dotted #ee9a3c; line-height: 25px; margin-top: 2px; }
.g-type { width: 328px; }
.grip-v { width: 4px; height: 38px; margin-left: 11px; background: repeating-linear-gradient(#111 0 2px, transparent 2px 4px); }
.rect-label { margin-left: 19px; color: #ddd; -webkit-text-stroke: .3px #ddd; font-size: 21.5px; }
.normal { margin-left: 11px; font-size: 21px; }
.g-fill { width: 139px; padding-left: 17px; }
.swatch { display: flex; width: 67px; height: 38px; margin-left: 7px; border: 2px solid #2c2c2c; background: #4d4d4d; }
.sw-w { width: 36px; background: #fff; display: block; }
.sw-none { display: flex; }
.sw-dd { flex: 1; display: flex; align-items: center; justify-content: center; }
.g-stroke { width: 296px; padding-left: 15px; }
.g-stroke .swatch { margin-left: 9px; }
.s106 { width: 106px; margin-left: 14px; }
.s120 { width: 120px; margin-left: 10px; }
.spin { display: flex; height: 38px; border: 2px solid #2c2c2c; background: #4c4c4c; flex: none; }
.steps { width: 34px; display: flex; flex-direction: column; align-items: center; justify-content: space-around; border-right: 2px solid #2c2c2c; background: linear-gradient(#4c4c4c 0 48%, #2c2c2c 48% 52%, #4c4c4c 52%); }
.up { width: 0; height: 0; border: 6px solid transparent; border-bottom: 10px solid #ccc; border-top: 0; }
.down { width: 0; height: 0; border: 6px solid transparent; border-top: 10px solid #ccc; border-bottom: 0; }
.val { flex: 1; background: #a6a6a6; color: #111; font-size: 22px; padding-left: 6px; line-height: 32px; }
.g-corner { width: 205px; padding-left: 21px; }
.corner { margin-right: 6px; }
.g-effects { width: 278px; padding-left: 17px; }
.check { margin-left: 11px; }
.opacity { width: 120px; height: 38px; display: flex; margin-left: 16px; border: 2px solid #2c2c2c; }
.pctv { flex: none; width: 88px; font-size: 20px; padding-left: 6px; }
.arrowbtn { flex: 1; display: flex; align-items: center; justify-content: center; background: #4c4c4c; }
.g-links { width: 562px; padding-left: 16px; }
.linkbox { width: 359px; height: 38px; margin-left: 9px; display: flex; align-items: center; border: 2px solid #2c2c2c; background: linear-gradient(#5b5b5b, #424242); padding: 0 10px 0 12px; }
.linktext { flex: 1; color: #e0e0e0; }
.linksep { width: 1px; height: 28px; background: #777; border-right: 2px solid #333; margin-right: 10px; }
.xbtn { width: 28px; height: 28px; margin-left: 9px; background: #4f4f4f; color: #6e6e6e; text-align: center; line-height: 28px; font-size: 18px; }
.g-pin { width: 168px; padding-left: 16px; }
.pin1 { margin-left: 11px; }
.pin2 { margin-left: 13px; }
.g-resize { width: 528px; padding-left: 15px; }
.resizebox { width: 81px; height: 44px; margin: 0 17px 0 13px; background: #333; display: flex; align-items: center; padding-left: 6px; gap: 4px; }
.resizebox .linksep { height: 34px; margin-right: 8px; background: #555; border-right: 1px solid #222; }
.g-resize .s120:last-child { margin-left: 8px; }
.g-resize .olink:nth-of-type(3) { margin-left: 13px; }
.g-align { width: 84px; padding-left: 15px; }
.g-footer { padding-left: 12px; border-right: 0; }
.cbox { width: 25px; height: 34px; background: #555; border: 3px solid #2f2f2f; }
.foot { margin-left: 8px; color: #ddd; }

/* workspace */
.workspace { display: flex; flex: 1; min-height: 0; background: #2a2a2a; }
.lefttools { width: 78px; flex: none; background: linear-gradient(90deg, #454545 0 72px, #2a2a2a 72px); position: relative; display: flex; flex-direction: column; }
.collapse { height: 24px; width: 72px; background: #333; color: #bbb; font-size: 16px; padding-left: 10px; line-height: 24px; letter-spacing: 1px; }
.collapse.r { width: 77px; text-align: right; padding: 0 8px 0 0; }
.grip { display: block; width: 40px; height: 12px; margin: 0 auto; background: repeating-linear-gradient(90deg, #0d0d0d 0 2px, transparent 2px 4px); flex: none; }
.lefttools > .grip { margin: 6px 0 8px 17px; }
.tool { width: 72px; height: 50px; display: flex; align-items: center; justify-content: center; position: relative; flex: none; }
.tool-t { font-family: "Liberation Serif", serif; font-size: 42px; color: #ccc; }
.sel { height: 50px; }
.selbox { width: 54px; height: 46px; background: #333; border: 3px solid #242424; display: flex; align-items: center; justify-content: center; }
.corner-tri { position: absolute; right: 6px; bottom: 0; width: 0; height: 0; border-left: 8px solid transparent; border-bottom: 8px solid #ccc; }
.hsep { width: 58px; height: 2px; margin: 1px 7px; background: #333; flex: none; }
.hsep.first { margin-top: 2px; margin-bottom: 3px; }
.tboxes { position: relative; height: 64px; margin-top: 5px; }
.tbox { position: absolute; display: grid; place-items: center; font-family: "Liberation Serif", serif; color: #ccc; border: 3px solid #2a2a2a; }
.tbox.back { left: 25px; top: 20px; width: 43px; height: 42px; font-size: 26px; }
.tbox.front { left: 5px; top: 0; width: 44px; height: 42px; background: #454545; border-color: #d0d0d0; outline: 2px solid #222; grid-template-columns: 1fr 1fr; font-size: 15px; line-height: 15px; }
.main { flex: 1; min-width: 0; display: flex; flex-direction: column; }
.tabs { height: 38px; display: flex; background: #2f2f2f; flex: none; }
.tab { height: 38px; display: flex; align-items: center; white-space: nowrap; }
.t1 { width: 647px; background: #333; color: #9a9a9a; margin-right: 2px; padding-left: 15px; font-size: 20.4px; -webkit-text-stroke: .4px #9a9a9a; }
.t2 { width: 162px; background: #4a4a4a; color: #e4e4e4; padding-left: 14px; font-size: 19.5px; font-weight: 700; }
.tx { font-weight: 400; font-size: 18px; color: #ccc; width: 33px; -webkit-text-stroke: 0; }
.t2 .tx { width: 33px; }
.hruler { display: block; flex: none; }
.rtext { font-family: "DejaVu Sans", sans-serif; font-size: 17.5px; fill: #d5d5d5; }
.below { flex: 1; display: flex; min-height: 0; }
.vruler { flex: none; display: block; background: #222; }
.stagecol { flex: 1; min-width: 0; display: flex; flex-direction: column; }
.bpbar { height: 39px; display: flex; flex: none; border-bottom: 0; font-size: 18px; color: #d8d8d8; }
.seg { height: 39px; position: relative; flex: none; display: flex; align-items: center; }
.s0 { width: 125px; background: #636363; }
.s1 { width: 262px; background: #5e8ecb; border-radius: 14px 0 0 14px; }
.lc { border-left: 3px solid #8a8a8a; border-radius: 14px 0 0 14px; }
.rc { border-right: 3px solid #8a8a8a; border-radius: 0 14px 14px 0; justify-content: flex-end; }
.s2 { width: 280px; background: #666; margin-right: 0; }
.s3 { width: 160px; background: #666; }
.s4 { width: 640px; background: linear-gradient(90deg, #555 0 621px, #666 621px); border-right: 3px solid #8a8a8a; border-radius: 14px 14px 14px 14px; }
.s6 { width: 158px; background: #666; padding-right: 10px; }
.s7 { width: 287px; background: #666; padding-right: 8px; }
.s8 { width: 278px; background: #5e8ecb; }
.s9 { flex: 1; background: #2a2a2a; }
.bx { font-weight: 400; font-size: 18px; margin-left: 14px; color: #ddd; }
.s1 .bx { margin-left: 16px; }
.s2 .bx { margin-left: 9px; }
.bp300 { position: absolute; left: 300px; font-size: 18px; }
.bpm { display: flex; align-items: center; }
.bpm em { font-style: normal; margin-left: 6px; }
.m320 { position: absolute; right: 9px; }
.bpr { width: 20px; height: 20px; margin: 0 4px; }
.la { width: 0; height: 0; border: 7px solid transparent; border-left: 0; }
.ra { width: 0; height: 0; border: 7px solid transparent; border-right: 0; }
.la.yl { border-right: 6px solid #cfcb69; } .ra.yl { border-left: 6px solid #cfcb69; } .yb { background: #cfcb69; }
.la.gr { border-right: 6px solid #a5cb6b; } .ra.gr { border-left: 6px solid #a5cb6b; } .gb { background: #a5cb6b; }
.la.te { border-right: 6px solid #58cfc4; } .ra.te { border-left: 6px solid #58cfc4; } .tb { background: #58cfc4; }

/* stage */
.stage { flex: 1; min-height: 0; position: relative; overflow: hidden; background: #474747; border-top: 2px solid #2a2a2a; padding: 21px 0 0 125px; }
.guide-h { position: absolute; left: 24px; right: 0; height: 1px; background: #3558b8; z-index: 5; }
.g1 { top: 20px; width: 101px; right: auto; }
.g2 { top: 254px; }
.gmark { position: absolute; left: 2px; z-index: 6; }
.gm1 { top: 9px; }
.gm2 { top: 243px; }
.page { width: 2048px; height: 1349px; background: #fff; position: relative; }
.site-head { height: 161px; background: #f5f5f5; display: flex; align-items: flex-start; padding: 40px 68px 0 40px; justify-content: space-between; }
.logo { width: 333px; height: 96px; border: 1.5px solid #e26a6a; position: relative; color: #666; font-family: "Open Sans", sans-serif; font-weight: 300; white-space: nowrap; }
.lg-re, .lg-amp { position: absolute; top: 24px; font-size: 58px; line-height: 60px; font-style: italic; transform: scaleX(.84); transform-origin: left; }
.lg-re { left: 0; }
.lg-amp { left: 66px; }
.lg-v { position: absolute; left: 5px; top: -33px; font-family: "Lato", sans-serif; font-size: 128px; line-height: 150px; font-weight: 700; color: #8ad2c9; transform: scaleX(.5); transform-origin: 50% 50%; }
.lg-sp { position: absolute; left: 171px; top: 32px; font-size: 45px; line-height: 50px; font-style: italic; letter-spacing: 1px; color: #6a6a6a; transform: scaleX(.87); transform-origin: left; }
.nav { display: flex; gap: 3.45px; margin-top: 37px; }
.navcell { height: 80px; border: 1.5px solid #e8505a; display: flex; justify-content: center; padding-top: 23px; flex: none; }
.navcell:first-child { border-left-color: #9a6fb0; }
.navlabel { height: 33px; border: 1.5px solid #ea6a70; font-family: "Inter", sans-serif; font-weight: 300; font-size: 25px; letter-spacing: 1.8px; line-height: 30px; color: #555; text-align: center; white-space: nowrap; display: flex; justify-content: center; }
.site-band { height: 102px; background: #333; border-top: 2px solid #d9d9d9; border-bottom: 1px solid #b33; position: relative; display: flex; padding-left: 40px; }
.phonebox { width: 73px; height: 76px; margin-top: 9px; border: 1.5px solid #b00f12; display: flex; align-items: center; justify-content: center; flex: none; }
.phonenum { width: 221px; height: 50px; margin: 24px 0 0 17px; border: 1.5px solid #b00f12; color: #7fcfc8; font-family: "Open Sans", sans-serif; font-size: 27.5px; line-height: 43px; flex: none; }
.pinbox { width: 73px; height: 76px; margin: 11px 0 0 260px; border: 1.5px solid #8a1012; display: flex; align-items: center; justify-content: center; flex: none; }
.addr { width: 452px; height: 50px; margin: 20px 0 0 16px; border: 1.5px solid #b00f12; border-bottom-color: #7a3f9a; color: #7fcfc8; font-family: "Open Sans", sans-serif; font-size: 27.5px; line-height: 40px; letter-spacing: -.28px; white-space: nowrap; flex: none; }
.sq { text-decoration: underline wavy #c0181c 2px; text-underline-offset: 3px; }
.plus { position: absolute; left: 997px; top: 9px; width: 23px; height: 25px; background: #7c7c7c; border: 2px solid #555; color: #333; font-size: 22px; line-height: 20px; text-align: center; z-index: 4; }
.book { width: 336px; height: 80px; margin: 10px 0 0 319px; background: #8ad1ca; border: 1.5px solid #e25a5a; box-shadow: inset 0 5px 0 #8ad1ca, inset 0 6px 0 #e25a5a, inset 0 -7px 0 #8ad1ca, inset 0 -8px 0 #e25a5a; color: #fff; display: flex; flex-direction: column; align-items: center; font-family: "Inter", sans-serif; font-weight: 300; font-size: 31px; line-height: 36px; padding-top: 3px; letter-spacing: 2.1px; flex: none; }
.ap { text-decoration: underline dotted #d92a2a 2px; text-underline-offset: 7px; }
.col { position: absolute; top: 39px; bottom: 0; width: 1px; background: rgba(130,190,250,.75); z-index: 2; }
.col-top { position: absolute; left: 40px; top: 39px; width: 1967px; height: 2px; background: #9cccf8; z-index: 2; }
.sel-top { position: absolute; left: 0; right: 0; top: -2px; height: 3px; background: linear-gradient(#a03a78 0 33%, #e31b2c 33%); z-index: 3; }
.sel-left { position: absolute; left: -1px; top: 0; width: 2px; height: 160px; background: #e01b2c; z-index: 3; }
.sel-bottom { position: absolute; left: 0; right: 0; top: 159px; height: 2px; background: #e01b2c; z-index: 3; }
.h { position: absolute; width: 13px; height: 12px; background: #fff; border: 2px solid #e01b2c; z-index: 6; }
.h1 { left: -7px; top: -6px; } .h2 { left: 1017px; top: -6px; } .h3 { left: -7px; top: 74px; } .h4 { left: -7px; top: 154px; } .h5 { left: 1017px; top: 154px; } .h6 { left: 2042px; top: 154px; }
.resizer { position: absolute; left: 2036px; top: 0; width: 24px; height: 150px; background: linear-gradient(90deg, #aaa, #ddd 40%, #bbb); border-radius: 0 0 6px 6px; z-index: 4; }
.resizer i { width: 4px; height: 30px; margin: 53px 0 0 9px; background: repeating-linear-gradient(#444 0 2px, transparent 2px 4px); box-shadow: 3px 0 0 #555; }
.hscroll { height: 28px; background: #333; display: flex; align-items: center; padding: 0 16px 0 9px; position: relative; border-bottom: 0; flex: none; margin-bottom: 4px; }
.hthumb { position: absolute; left: 849px; top: 0; width: 1114px; height: 28px; background: #888; }
.hscroll .hr { margin-left: auto; }
.vscroll { width: 30px; background: #333; display: flex; flex-direction: column; align-items: center; justify-content: space-between; padding: 10px 0 44px; flex: none; border-left: 2px solid #2a2a2a; }

/* right dock */
.rightdock { width: 83px; flex: none; background: linear-gradient(90deg, #2a2a2a 0 6px, #474747 6px); padding-left: 6px; display: flex; flex-direction: column; }
.rsec { border-bottom: 2px solid #2d2d2d; display: flex; flex-direction: column; align-items: center; padding-top: 6px; position: relative; flex: none; }
.s-a { height: 80px; padding-top: 4px; }
.s-b { height: 195px; }
.s-c { height: 193px; }
.s-d { height: 195px; }
.s-e { height: 138px; }
.rbtn { width: 58px; height: 49px; margin-top: 6px; background: #2e2e2e; border-radius: 8px; display: flex; align-items: center; justify-content: center; }
.ric { display: block; }
.s-a .ric { margin-top: 19px; }
.r1 { margin-top: 16px; } .r2 { margin-top: 18px; }
.r3 { margin-top: 15px; } .r4 { margin-top: 20px; } .r5 { margin-top: 23px; }
.r6 { margin-top: 14px; } .r7 { margin-top: 24px; } .r8 { margin-top: 25px; }
.r9 { margin-top: 14px; }
.gly-a { font-family: "Liberation Serif", serif; font-style: italic; font-size: 38px; fill: #ccc; }
.fx { font-family: "Liberation Serif", serif; font-style: italic; font-size: 40px; color: #ccc; line-height: 46px; margin-top: 18px; }

/* bottom */
.bottom { height: 100px; position: relative; background: #333; background-image: repeating-linear-gradient(115deg, #383838 0 3px, #303030 3px 7px); }
.statuswin { position: absolute; left: 143px; top: 0; width: 2592px; height: 45px; background: linear-gradient(#8a8a8a, #6a6a6a); border-radius: 0 0 10px 10px; font-family: "Liberation Sans", sans-serif; color: #333; }
.items { position: absolute; left: 49px; top: 10px; font-size: 25.5px; }
.mailtxt { position: absolute; left: 2348px; top: 11px; font-size: 23px; }
.warn { position: absolute; left: 2510px; top: 6px; }
.dock { position: absolute; left: 390px; top: 2px; width: 2097px; height: 98px; background: #3c3c3c; border-radius: 10px 10px 0 0; border-left: 2px solid #555; border-right: 2px solid #4f4f4f; border-top: 2px solid #4a4a4a; display: flex; padding-left: 4px; }
.dslot { width: 82px; height: 98px; display: flex; flex-direction: column; align-items: center; padding-top: 8px; position: relative; flex: none; }
.dslot svg { display: block; }
.dot { position: absolute; top: 86px; left: 37px; width: 7px; height: 7px; border-radius: 50%; background: #bbb; }
.dsep { width: 1px; height: 74px; margin: 12px 20px 0 20px; background: #888; flex: none; }
.doc { margin-right: 3px; } .doc2 { margin-right: -3px; }
.doc3 { padding-top: 18px; }
.ist { font-family: "Liberation Sans", sans-serif; font-size: 18px; fill: #fff; text-anchor: middle; font-weight: 700; }
.cal-m { font-family: "Liberation Sans", sans-serif; font-size: 12px; fill: #fff; text-anchor: middle; }
.cal-d { font-family: "Liberation Sans", sans-serif; font-size: 33px; fill: #222; text-anchor: middle; }
.fz { font-family: "Liberation Sans", sans-serif; font-weight: 700; font-style: italic; font-size: 58px; fill: #fff; text-anchor: middle; }
.badge { font-family: "Liberation Sans", sans-serif; font-size: 17px; fill: #fff; text-anchor: middle; }
.ai-t { font-family: "Liberation Sans", sans-serif; text-anchor: middle; font-size: 40px; }
.id { fill: #ee5c9e; }
.mud { fill: #c5e030; font-size: 38px; }
.idm { fill: #ee5c9e; font-size: 20px; }
.wd { font-family: "Liberation Sans", sans-serif; font-size: 28px; fill: #fff; text-anchor: middle; }

/* dropdown */
.dropdown { position: absolute; left: 2078px; top: 173px; width: 420px; height: 174px; background: #4f4f4f; border: 2px solid #272727; z-index: 20; padding-top: 0; font-size: 23px; color: #dcdcdc; box-shadow: 0 8px 24px rgba(0,0,0,.3); }
.dd-item { height: 44px; line-height: 42px; padding-left: 42px; position: relative; white-space: nowrap; }
.ck { position: absolute; left: 8px; font-size: 24px; }

/* panel */
.panel { position: absolute; left: 2344px; top: 292px; width: 456px; height: 477px; background: #474747; border: 2px solid #262626; border-top: 0; z-index: 10; font-size: 22px; }
.ptabs { height: 34px; background: #2e2e2e; display: flex; align-items: center; position: relative; font-size: 19.5px; color: #aaa; overflow: hidden; -webkit-text-stroke: .4px currentColor; }
.ptab { height: 34px; line-height: 34px; position: absolute; white-space: nowrap; overflow: hidden; }
.lib { left: 0; width: 188px; background: #474747; padding-right: 12px; color: #ddd; display: flex; justify-content: flex-end; }
.st { left: 191px; width: 71px; background: #363636; padding-left: 6px; }
.sc { left: 264px; width: 113px; background: #363636; padding-left: 6px; }
.pmore { position: absolute; left: 420px; font-weight: 400; color: #ccc; }
.preview { height: 220px; margin: 12px 4px 0 4px; background: repeating-conic-gradient(#ececec 0 25%, #fff 0 50%) 0 0 / 4px 4px; }
.preview p { margin: 0; padding: 79px 0 0 58px; color: #111; font-size: 20.9px; line-height: 27px; white-space: nowrap; }
.plist { margin-top: 7px; height: 153px; display: flex; border-top: 2px solid #222; border-bottom: 2px solid #222; }
.prows { flex: 1; overflow: hidden; }
.prow { height: 44px; margin-bottom: 0; display: flex; align-items: center; border-bottom: 2px solid #2b2b2b; padding-left: 6px; color: #ddd; font-size: 22px; flex: none; }
.pt { margin-right: 21px; margin-top: -6px; }
.prow span { margin-left: 10px; }
.prow svg { margin-right: -2px; }
.pscroll { width: 28px; background: #3d3d3d; border-left: 2px solid #222; border-right: 2px solid #222; display: flex; flex-direction: column; align-items: center; padding-top: 10px; flex: none; }
.small { border-width: 6px; }
.tri-u.small { border-bottom: 7px solid #e8e8e8; border-top: 0; }
.tri-d.small { border-top: 7px solid #e8e8e8; border-bottom: 0; margin-top: 58px; }
.pthumb { width: 28px; height: 35px; background: #8a8a8a; margin-top: 6px; flex: none; }
.pfoot { height: 34px; background: #474747; border-bottom: 2px solid #2a2a2a; display: flex; align-items: center; padding-left: 9px; }
.help { width: 22px; height: 22px; border-radius: 50%; background: #aaa; color: #333; font-weight: 700; font-size: 16px; text-align: center; line-height: 22px; }
.pgrip { height: 14px; display: flex; align-items: center; }
.pgrip .grip { height: 7px; }
</style>
